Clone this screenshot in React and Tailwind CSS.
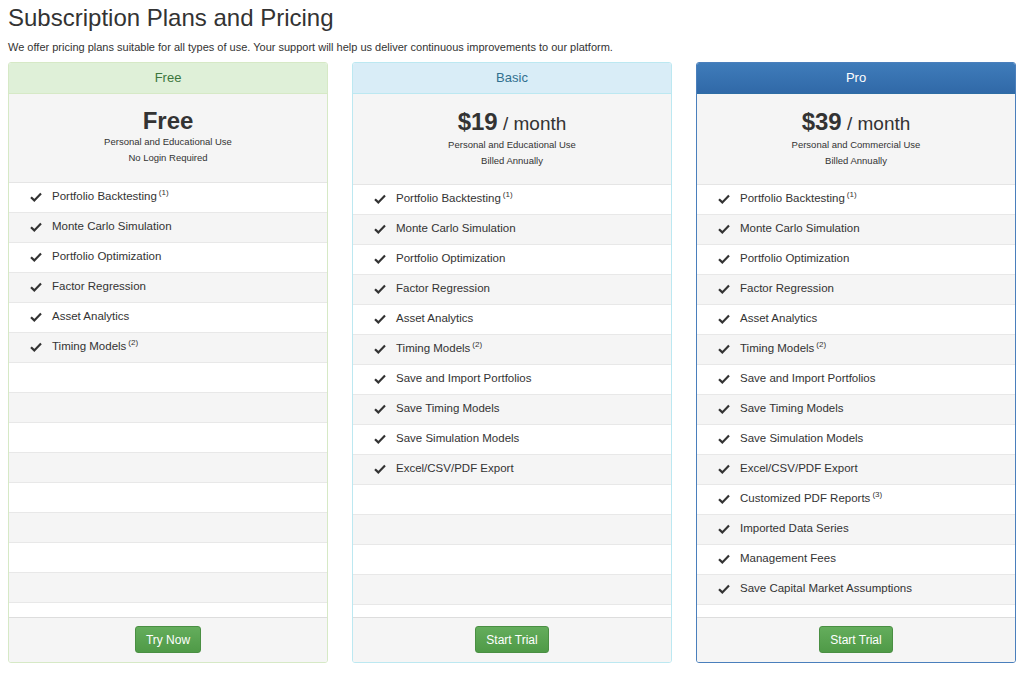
const base = ["Portfolio Backtesting|1","Monte Carlo Simulation","Portfolio Optimization","Factor Regression","Asset Analytics","Timing Models|2"];
const basic = [...base,"Save and Import Portfolios","Save Timing Models","Save Simulation Models","Excel/CSV/PDF Export"];
const pro = [...basic,"Customized PDF Reports|3","Imported Data Series","Management Fees","Save Capital Market Assumptions"];

function Check(){return <svg width="12" height="10" viewBox="0 0 12 10" className="mr-2.5 shrink-0"><path d="M1 5.2 L4.3 8.4 L11 1.6" fill="none" stroke="#333" strokeWidth="2.2"/></svg>}

function Card({title, hdr, border, price, month, l1, l2, feats, btn}){
  const rows=[];
  for(let i=0;i<16;i++) rows.push(feats[i]);
  return (
    <div className={`flex flex-col rounded-[3px] border overflow-hidden h-[601px] ${border}`}>
      <div className={`h-[31px] flex items-center justify-center text-[13px] border-b ${hdr}`}>{title}</div>
      <div className={`bg-[#f5f5f5] flex flex-col items-center border-b border-[#e5e5e5] ${month?'h-[91px] pt-[14px]':'h-[89px] pt-[13px]'}`}>
        <div className="text-[#333] text-[24px] leading-[28px] font-bold">{price}{month && <span className="font-normal text-[19px]"> / month</span>}</div>
        <div className="text-[9.5px] leading-[12px] text-[#333] mt-[1px]">{l1}</div>
        <div className="text-[9.5px] leading-[12px] text-[#333] mt-[4px]">{l2}</div>
      </div>
      <div className="flex-1 overflow-hidden">
        {rows.map((f,i)=>{const [t,s]=(f||"").split("|");return (
          <div key={i} className={`h-[30px] flex items-center pl-[21px] border-b border-[#e8e8e8] text-[11.5px] text-[#333] ${i%2?'bg-[#f5f5f5]':'bg-white'}`}>
            {f && <><Check/>{t}{s && <sup className="text-[8px] ml-0.5 -top-1">({s})</sup>}</>}
          </div>)})}
      </div>
      <div className="h-[45px] shrink-0 bg-[#f5f5f5] border-t border-[#ddd] flex items-center justify-center">
        <button className="h-[27px] px-[10px] rounded-[3px] text-white text-[12px] bg-gradient-to-b from-[#64ad5c] to-[#4f9a47] border border-[#4a8f43]">{btn}</button>
      </div>
    </div>);
}

export default function App(){
  return (
    <div className="w-[1024px] h-[680px] bg-white px-2 pt-[3px]" style={{fontFamily:'"Liberation Sans", Arial, sans-serif'}}>
      <h1 className="text-[24px] leading-[30px] text-[#333]">Subscription Plans and Pricing</h1>
      <p className="text-[11px] text-[#333] mt-[6px] mb-[6px]">We offer pricing plans suitable for all types of use. Your support will help us deliver continuous improvements to our platform.</p>
      <div className="grid grid-cols-3 gap-6 items-start">
        <Card title="Free" hdr="bg-[#dff0d8] text-[#3c763d] border-[#d6e9c6]" border="border-[#d6e9c6] h-[598px]" price="Free" l1="Personal and Educational Use" l2="No Login Required" feats={base} btn="Try Now"/>
        <Card title="Basic" hdr="bg-[#d9edf7] text-[#31708f] border-[#bce8f1]" border="border-[#bce8f1]" price="$19" month l1="Personal and Educational Use" l2="Billed Annually" feats={basic} btn="Start Trial"/>
        <Card title="Pro" hdr="bg-gradient-to-b from-[#3f7cba] to-[#3069a8] text-white border-[#2e6da4]" border="border-[#4a7fbc]" price="$39" month l1="Personal and Commercial Use" l2="Billed Annually" feats={pro} btn="Start Trial"/>
      </div>
    </div>);
}
